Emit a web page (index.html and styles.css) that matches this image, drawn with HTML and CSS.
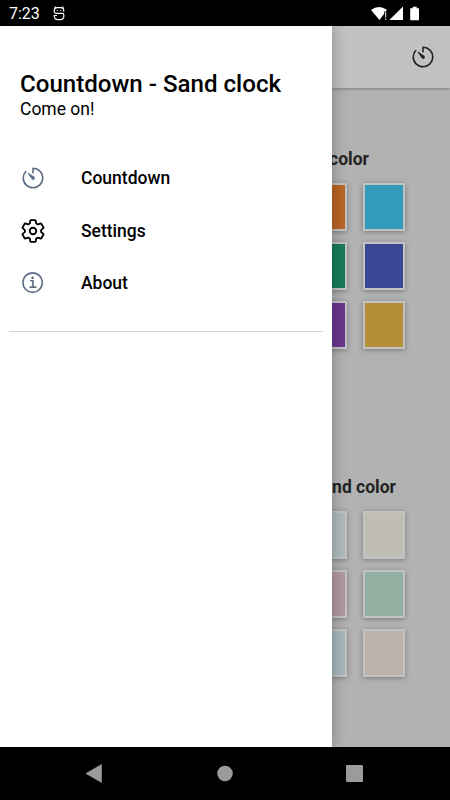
FILE: index.html
```html
<!DOCTYPE html>
<html lang="en">
<head>
<meta charset="utf-8">
<title>Countdown - Sand clock</title>
<link rel="stylesheet" href="styles.css">
</head>
<body>
<svg width="0" height="0" class="defs">
  <symbol id="timer" viewBox="0 0 512 512">
    <path d="M112.91 128A191.85 191.85 0 0 0 64 254c-1.18 106.35 85.65 193.8 192 194 106.2.2 192-85.83 192-192 0-104.54-83.55-189.61-187.5-192a4.36 4.36 0 0 0-4.5 4.37V152" fill="none" stroke="currentColor" stroke-width="32" stroke-linecap="round" stroke-linejoin="round"/>
    <path d="M233.38 278.63l-79-113a8.13 8.13 0 0 1 11.32-11.32l113 79a32.5 32.5 0 0 1-37.25 53.26 33.21 33.21 0 0 1-8.07-7.94z" fill="currentColor"/>
  </symbol>
</svg>
<div class="phone">
  <header class="status">
    <span class="time">7:23</span>
    <svg class="debug" width="12" height="15" viewBox="0 0 12 15" fill="none" stroke="#fff" stroke-width="1.2">
      <path d="M10.7 5.8V4.4Q10.7 1.6 7.6 1.6H4.4Q1.3 1.6 1.3 4.4v1.4q0 1.5 1.5 1.5h6.5q1.5 0 1.5 1.5V10q0 3.7-3.6 3.7H5Q1.3 13.7 1.3 10V9.5H4M2.5 2L1.8.5M9.5 2l.7-1.5M3.8 4.500h1M7.2 4.500h1"/>
    </svg>
    <svg class="signals" width="50" height="16" viewBox="0 0 50 16" fill="#fff">
      <path d="M0 4Q8-1.800 16 4L8.500 14z"/>
      <path d="M13.200 5.500h3V15h-3z" fill="#000"/>
      <path d="M14.200 6h1v5.500h-1zM14.200 12.500h1V14h-1zM18.300 14L32 .500V14zM39.200 2.200h2.500V.700h4v1.500H48V14.300h-8.800z"/>
    </svg>
  </header>
  <main class="page">
    <div class="toolbar"><svg class="tool-icon"><use href="#timer"/></svg></div>
    <section class="group">
      <h2 class="sand-title">Sand color</h2>
      <div class="swatches">
        <i class="swatch orange"></i><i class="swatch cyan"></i>
        <i class="swatch green"></i><i class="swatch indigo"></i>
        <i class="swatch purple"></i><i class="swatch gold"></i>
      </div>
    </section>
    <section class="group second">
      <h2>Background color</h2>
      <div class="swatches">
        <i class="swatch mist"></i><i class="swatch cream"></i>
        <i class="swatch pink"></i><i class="swatch mint"></i>
        <i class="swatch ice"></i><i class="swatch blush"></i>
      </div>
    </section>
    <aside class="drawer">
      <h1>Countdown - Sand clock</h1>
      <p class="note">Come on!</p>
      <nav>
        <a class="item slate"><svg class="icon"><use href="#timer"/></svg><span>Countdown</span></a>
        <a class="item"><svg class="icon" viewBox="0 0 512 512" fill="none" stroke="currentColor" stroke-width="36" stroke-linecap="round" stroke-linejoin="round">
          <path d="M416.39 256a154.34 154.34 0 0 1-1.53 20.79l45.21 35.46a10.81 10.81 0 0 1 2.45 13.75l-42.77 74a10.81 10.81 0 0 1-13.14 4.59l-44.9-18.08a16.11 16.11 0 0 0-15.17 1.75A164.48 164.48 0 0 1 325 400.8a15.94 15.94 0 0 0-8.82 12.14l-6.73 47.89a11.08 11.08 0 0 1-10.68 9.17h-85.54a11.11 11.11 0 0 1-10.69-8.87l-6.72-47.82a16.07 16.07 0 0 0-9-12.22 155.3 155.3 0 0 1-21.46-12.57 16 16 0 0 0-15.11-1.71l-44.89 18.07a10.81 10.81 0 0 1-13.14-4.58l-42.77-74a10.8 10.8 0 0 1 2.45-13.75l38.21-30a16.05 16.05 0 0 0 6-14.08c-.36-4.17-.58-8.33-.58-12.5s.21-8.27.58-12.35a16 16 0 0 0-6.07-13.94l-38.19-30A10.81 10.81 0 0 1 49.48 186l42.77-74a10.81 10.81 0 0 1 13.14-4.59l44.9 18.08a16.11 16.11 0 0 0 15.17-1.75A164.48 164.48 0 0 1 187 111.2a15.94 15.94 0 0 0 8.82-12.14l6.73-47.89A11.08 11.08 0 0 1 213.23 42h85.54a11.11 11.11 0 0 1 10.69 8.87l6.72 47.82a16.07 16.07 0 0 0 9 12.22 155.3 155.3 0 0 1 21.46 12.57 16 16 0 0 0 15.11 1.71l44.89-18.07a10.81 10.81 0 0 1 13.14 4.58l42.77 74a10.8 10.8 0 0 1-2.45 13.75l-38.21 30a16.05 16.05 0 0 0-6.05 14.08c.33 4.14.55 8.3.55 12.47z"/>
          <circle cx="256" cy="256" r="64"/>
        </svg><span>Settings</span></a>
        <a class="item slate"><svg class="icon" viewBox="0 0 512 512" fill="none" stroke="currentColor" stroke-width="32">
          <circle cx="248" cy="248" r="192"/><path d="M212 212h44v120M200 338h112" stroke-linecap="round"/><circle cx="248" cy="154" r="26" fill="currentColor" stroke="none"/>
        </svg><span>About</span></a>
      </nav>
    </aside>
  </main>
  <footer class="navbar">
    <svg width="450" height="53" fill="#9b9b9b">
      <path d="M86 26.500L101.500 17.500V35.500z" stroke="#9b9b9b" stroke-width=".6" stroke-linejoin="round"/>
      <circle cx="225" cy="26.500" r="7.800"/>
      <rect x="346" y="18" width="17" height="17" rx="1"/>
    </svg>
  </footer>
</div>
</body>
</html>
```
FILE: styles.css
```css
* { box-sizing: border-box; }
body { margin: 0; font-family: Roboto, sans-serif; color: #000; }
.defs { position: absolute; }
.phone { width: 450px; height: 800px; display: flex; flex-direction: column; overflow: hidden; background: #000; }
.status { height: 26px; flex: none; display: flex; align-items: center; padding: 1px 29px 0 9px; color: #fff; }
.time { font-size: 16px; width: 44px; line-height: 24px; }
.signals { margin-left: auto; }
.page { position: relative; flex: 1; background: #b2b2b2; overflow: hidden; }
.toolbar { height: 62px; background: #c1c1c1; box-shadow: 0 1px 3px rgba(0, 0, 0, .3); display: flex; justify-content: flex-end; align-items: center; padding-right: 14px; }
.tool-icon { width: 26px; height: 26px; color: #242424; }
.group { padding: 60px 45px 0 0; display: flex; flex-direction: column; align-items: flex-end; }
.second { padding-top: 127px; }
h2 { margin: 0; font-size: 17.500px; line-height: 22px; font-weight: 700; color: #222; padding-right: 9px; }
.sand-title { padding-right: 36px; }
.swatches { display: grid; grid-template-columns: 42px 42px; grid-auto-rows: 48px; gap: 11px 16px; margin-top: 13px; }
.swatch { border: 2px solid #c2c2c2; box-shadow: 0 1px 5px rgba(0, 0, 0, .32); }
.orange { background: #b96526; }
.cyan { background: #339aba; }
.green { background: #197b58; }
.indigo { background: #394693; }
.purple { background: #6a368b; }
.gold { background: #b58f35; }
.mist { background: #aebbbd; }
.cream { background: #c0bdb4; }
.pink { background: #b198a1; }
.mint { background: #91b0a1; }
.ice { background: #a7b8bf; }
.blush { background: #bdb2ad; }
.drawer { position: absolute; left: 0; top: 0; bottom: 0; width: 332px; background: #fff; box-shadow: 0 0 14px rgba(0, 0, 0, .3); padding: 44px 9px 0; }
h1 { margin: 0; padding-left: 11px; font-size: 24.100px; line-height: 28px; font-weight: 500; white-space: nowrap; }
.note { margin: 0; padding-left: 11px; font-size: 17.500px; line-height: 22px; }
nav { margin-top: 32px; height: 180px; border-bottom: 1px solid #d6d6d6; }
.item { display: flex; align-items: center; height: 52.500px; padding-left: 11px; font-size: 17.500px; font-weight: 500; }
.item span { margin-left: 35px; }
.icon { width: 26px; height: 26px; }
.slate .icon { color: #5d6c82; }
.navbar { height: 53px; flex: none; }
```
